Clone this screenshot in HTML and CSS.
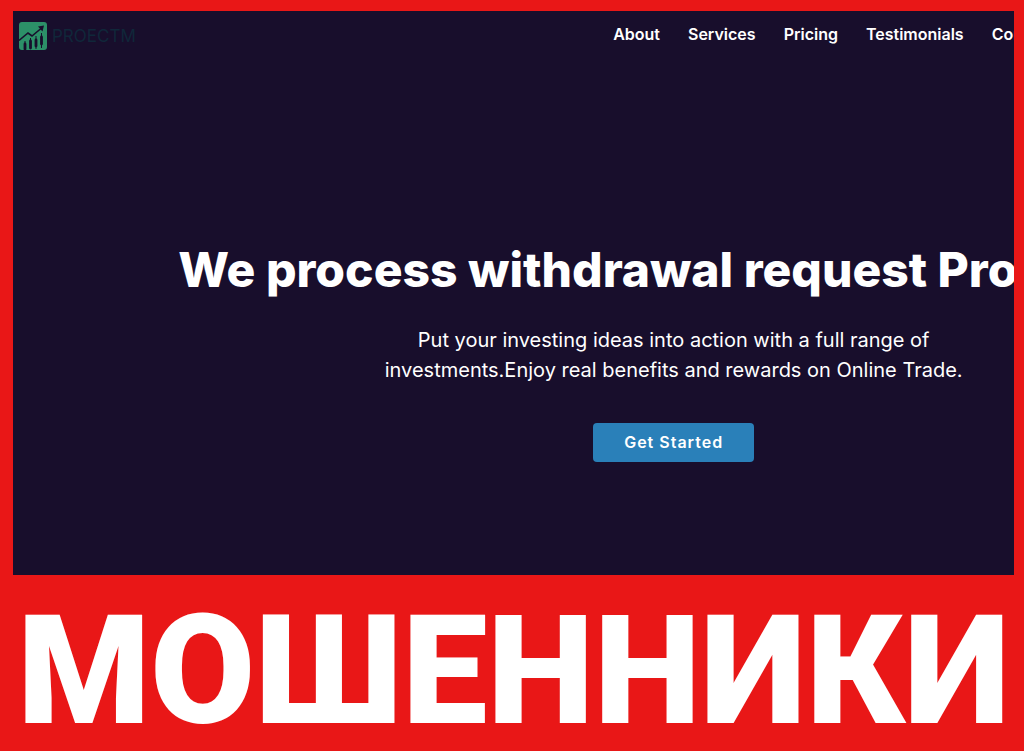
FILE: index.html
```
<!DOCTYPE html>
<html lang="en">
<head>
  <meta charset="UTF-8">
  <meta name="viewport" content="width=device-width, initial-scale=1.0">
  <title>ProectM</title>
  <link rel="stylesheet" href="styles.css">
</head>
<body>
  <div class="preview">
    <div class="site">
      <header class="header">
        <a class="logo" href="#">
          <svg class="logo-icon" viewBox="0 0 28 28" aria-hidden="true">
            <rect width="28" height="28" rx="3" fill="#2c9068"/>
            <path d="M0 18.500 L9 11 L13 14 L22 6.500" fill="none" stroke="#180e2c" stroke-width="1.600"/>
            <path d="M19 4.500 L25 3.500 L23.500 9.500 Z" fill="#180e2c"/>
            <path d="M6 22v5M11.500 19v7M17 18v6M22.500 15v7" stroke="#180e2c" stroke-width="2.800" stroke-linecap="round"/>
            <path d="M6 19v3M11.500 16v11M17 14v13M22.500 11v15" stroke="#180e2c" stroke-width="1"/>
          </svg>
          <span>PROECTM</span>
        </a>
        <nav class="nav">
          <a href="#about">About</a>
          <a href="#services">Services</a>
          <a href="#pricing">Pricing</a>
          <a href="#testimonials">Testimonials</a>
          <a href="#contact">Contact</a>
        </nav>
      </header>

      <main class="hero">
        <h1>We process withdrawal request ProectM</h1>
        <p>Put your investing ideas into action with a full range of investments.Enjoy real benefits and rewards on Online Trade.</p>
        <button class="cta" type="button">Get Started</button>
      </main>
    </div>
  </div>

  <div class="banner" lang="ru">МОШЕННИКИ</div>
</body>
</html>
```
FILE: styles.css
```
/* Base styles */
* { box-sizing: border-box; }
body {
  margin: 0;
  min-height: 100vh;
  padding: 11px 10px 0 13px;
  display: flex;
  flex-direction: column;
  background-color: #e91717;
  color: #fff;
  font-family: Inter, "Open Sans", sans-serif;
  overflow: hidden;
}
a { color: inherit; text-decoration: none; }

/* Site window, wider than its red frame */
.preview {
  background-color: #180e2c;
  overflow: hidden;
}
.site { width: 132%; }

.header {
  display: flex;
  align-items: center;
  padding: 8px 6px;
}
.logo {
  display: flex;
  align-items: center;
  gap: 5px;
  width: 45%;
  height: 34px;
  color: #10273a;
  font-size: 17px;
}
.logo-icon { width: 28px; height: 28px; }
.nav {
  display: flex;
  gap: 28px;
  padding: 0 0 4px 5px;
  font-size: 16px;
  line-height: 30px;
  font-weight: 600;
}

/* Hero */
.hero {
  display: flex;
  flex-direction: column;
  align-items: center;
  padding: 177px 0 113px;
  text-align: center;
}
.hero h1 {
  width: 75%;
  margin: 0 0 23px;
  font-size: 48px;
  line-height: 64px;
  font-weight: 800;
  text-align: left;
  white-space: nowrap;
}
.hero p {
  max-width: 620px;
  margin: 0 0 38px;
  font-size: 20px;
  line-height: 30px;
}
.cta {
  padding: 0 31px;
  border: none;
  border-radius: 4px;
  background-color: #2a80b9;
  color: #fff;
  font: 600 16px/39px Inter, "Open Sans", sans-serif;
  letter-spacing: 1px;
  cursor: pointer;
}

/* Warning banner */
.banner {
  flex: 1;
  display: flex;
  align-items: center;
  justify-content: center;
  padding-top: 15px;
  font-family: Roboto, "Noto Sans", sans-serif;
  font-size: 152px;
  line-height: 152px;
  font-weight: 900;
  white-space: nowrap;
}
```
